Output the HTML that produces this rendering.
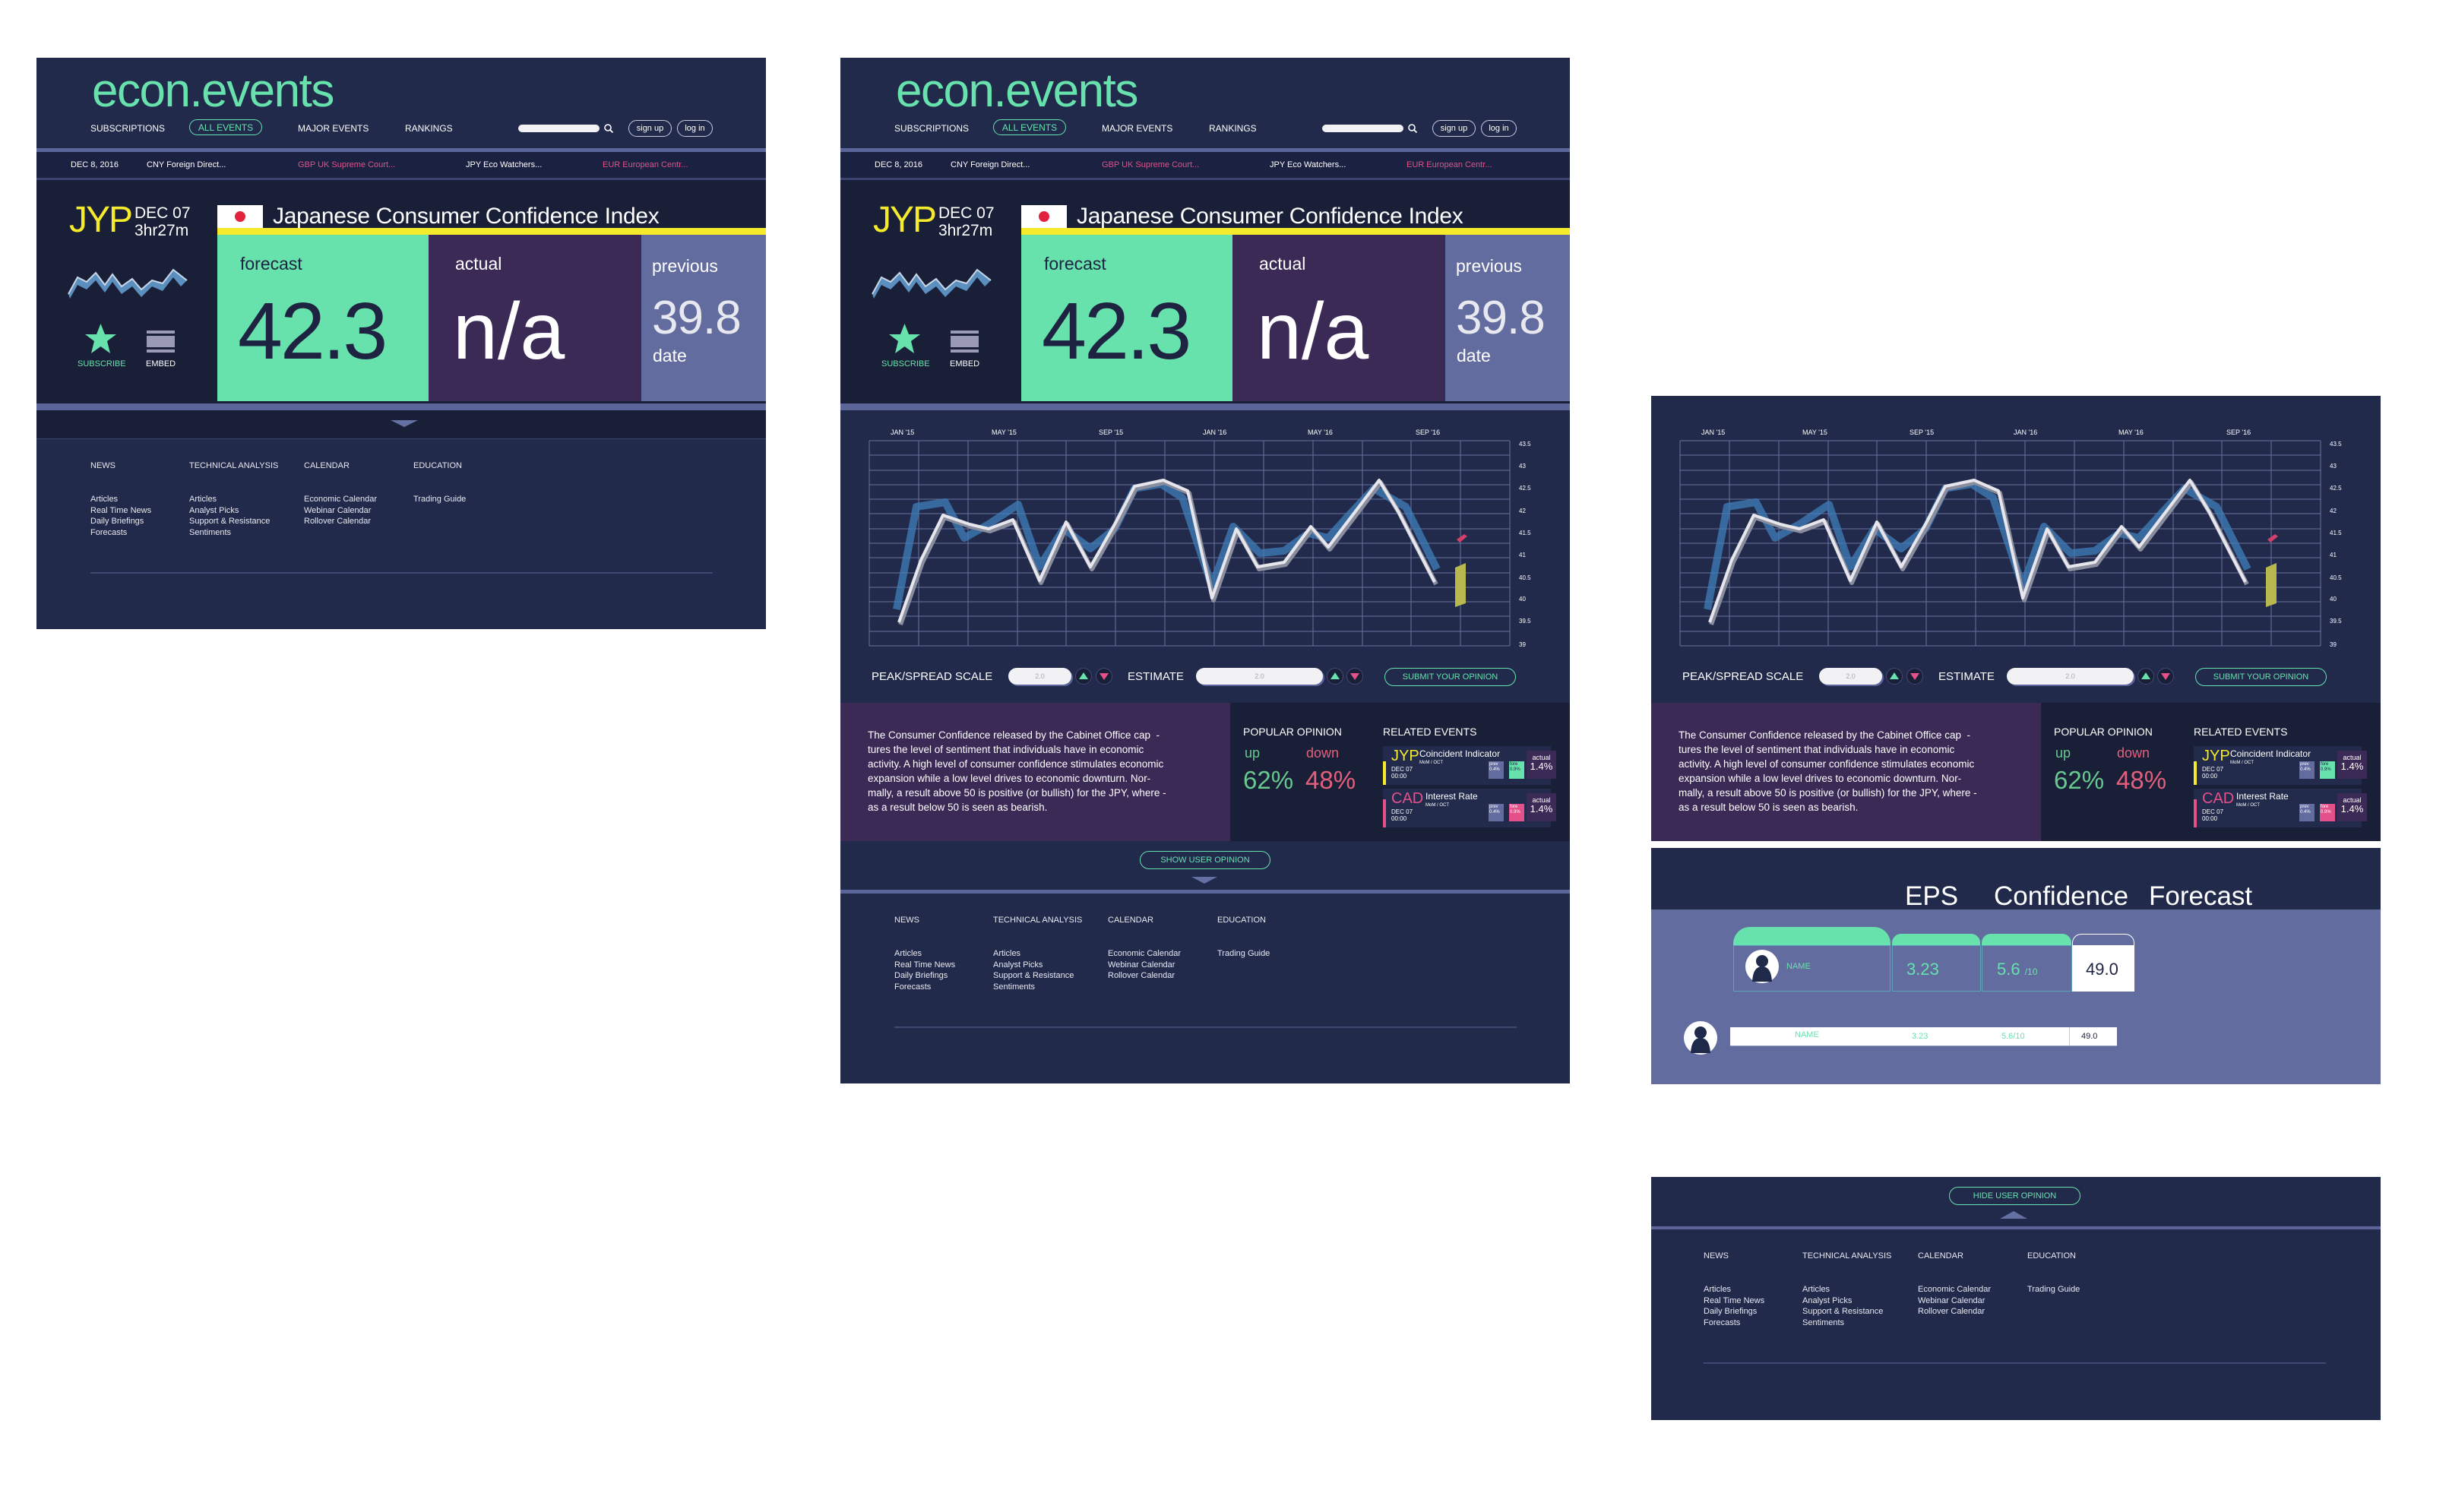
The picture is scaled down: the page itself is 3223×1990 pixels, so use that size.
<!DOCTYPE html>
<html><head><meta charset="utf-8">
<style>
*{margin:0;padding:0;box-sizing:border-box}
body{width:3223px;height:1990px;background:#fff;position:relative;overflow:hidden;font-family:"Liberation Sans Narrow","Liberation Sans",sans-serif;color:#fff}
.a{position:absolute}
.p{position:absolute;width:960px;overflow:hidden;background:#212a4b}
.t{position:absolute;white-space:nowrap;line-height:1}
.pill{position:absolute;border:1.5px solid #67e2ad;border-radius:14px;color:#67e2ad;display:flex;align-items:center;justify-content:center;font-size:12px}
.wp{position:absolute;border:1.5px solid #c8cbe0;border-radius:12px;color:#fff;display:flex;align-items:center;justify-content:center;font-size:11px}
.foot{position:absolute;left:0;width:960px;height:260px;background:#212a4b}
.foot .h{position:absolute;top:29px;font-size:11px;color:#e8e8f0}
.foot .l{position:absolute;top:72px;font-size:11px;line-height:14.7px;color:#e8e8f0}
.foot .ln{position:absolute;top:175px;left:71px;width:819px;height:2px;background:#3e4873}
.circ{position:absolute;width:22px;height:22px;border-radius:50%;background:#1a1f38;border:1px solid #3e4873}
.tri-up{position:absolute;width:0;height:0;border-left:6px solid transparent;border-right:6px solid transparent;border-bottom:9px solid #67e2ad;left:4px;top:5px}
.tri-dn{position:absolute;width:0;height:0;border-left:6px solid transparent;border-right:6px solid transparent;border-top:9px solid #e4508a;left:4px;top:6px}
.card{position:absolute;left:714px;width:221px;height:51px;background:#222b4c}
.sm{position:absolute;font-size:6px;line-height:7px;color:#fff;padding:1px}
</style></head><body>

<!-- ============ PANEL 1 ============ -->
<div class="p" style="left:48px;top:76px;height:752px">
  <div class="a" style="left:0;top:119px;width:960px;height:5px;background:#5c6599"></div>
  <div class="a" style="left:0;top:124px;width:960px;height:34px;background:#1b2140"></div>
  <div class="a" style="left:0;top:158px;width:960px;height:3px;background:#3b4470"></div>
  <div class="a" style="left:0;top:161px;width:960px;height:294px;background:#1a1f38"></div>
  <div class="a" style="left:0;top:455px;width:960px;height:9px;background:#5c6599"></div>
  <div class="a" style="left:0;top:464px;width:960px;height:37px;background:#1a1f38"></div>
  <div class="a" style="left:466px;top:477px;width:0;height:0;border-left:18px solid transparent;border-right:18px solid transparent;border-top:9px solid #6570a3"></div>
  <div class="a" style="left:0;top:501px;width:960px;height:1px;background:#3b4470"></div>

  <!-- header -->
  <div class="t" style="left:73px;top:13px;font-size:62px;color:#67e2ad;font-family:'Liberation Sans',sans-serif;letter-spacing:-1.5px">econ.events</div>
  <div class="t" style="left:71px;top:87px;font-size:12px">SUBSCRIPTIONS</div>
  <div class="pill" style="left:201px;top:81px;width:96px;height:21px">ALL EVENTS</div>
  <div class="t" style="left:344px;top:87px;font-size:12px">MAJOR EVENTS</div>
  <div class="t" style="left:485px;top:87px;font-size:12px">RANKINGS</div>
  <div class="a" style="left:634px;top:88px;width:107px;height:10px;background:#f2f2f5;border-radius:5px"></div>
  <svg class="a" style="left:746px;top:86px" width="14" height="14"><circle cx="6" cy="6" r="4" fill="none" stroke="#fff" stroke-width="1.6"/><line x1="9" y1="9" x2="12.5" y2="12.5" stroke="#fff" stroke-width="1.8"/></svg>
  <div class="wp" style="left:779px;top:82px;width:57px;height:22px">sign up</div>
  <div class="wp" style="left:843px;top:82px;width:47px;height:22px">log in</div>
  <!-- ticker -->
  <div class="t" style="left:45px;top:136px;font-size:11px">DEC 8, 2016</div>
  <div class="t" style="left:145px;top:136px;font-size:11px">CNY Foreign Direct...</div>
  <div class="t" style="left:344px;top:136px;font-size:11px;color:#e4508a">GBP UK Supreme Court...</div>
  <div class="t" style="left:565px;top:136px;font-size:11px">JPY Eco Watchers...</div>
  <div class="t" style="left:745px;top:136px;font-size:11px;color:#e4508a">EUR European Centr...</div>
  <!-- main -->
  <div class="t" style="left:43px;top:190px;font-size:48px;color:#f5ea2b;font-family:'Liberation Sans',sans-serif;letter-spacing:-2px">JYP</div>
  <div class="t" style="left:129px;top:194px;font-size:21px">DEC 07</div>
  <div class="t" style="left:129px;top:217px;font-size:21px">3hr27m</div>
  <svg class="a" style="left:40px;top:271px" width="162" height="48"><polygon points="2,40 14,18 26,24 38,12 50,28 60,14 72,30 86,20 98,34 112,22 126,26 140,8 158,22 150,30 140,18 126,36 112,30 98,44 86,30 72,40 60,24 50,38 38,22 26,34 14,28 4,46" fill="#5b8fc0"/><polyline points="2,40 14,18 26,24 38,12 50,28 60,14 72,30 86,20 98,34 112,22 126,26 140,8 158,22" fill="none" stroke="#c9d6e6" stroke-width="2"/></svg>
  <svg class="a" style="left:63px;top:349px" width="43" height="41"><polygon points="21.5,1 27,15 42,15 30,24 34,40 21.5,31 9,40 13,24 1,15 16,15" fill="#67e2ad"/></svg>
  <div class="a" style="left:145px;top:359px;width:37px;height:4px;background:#9a9ab5"></div>
  <div class="a" style="left:145px;top:366px;width:37px;height:15px;background:#9a9ab5"></div>
  <div class="a" style="left:145px;top:384px;width:37px;height:4px;background:#9a9ab5"></div>
  <div class="t" style="left:54px;top:398px;font-size:11px;color:#67e2ad">SUBSCRIBE</div>
  <div class="t" style="left:144px;top:398px;font-size:11px">EMBED</div>

  <div class="a" style="left:238px;top:194px;width:60px;height:30px;background:#fff"></div>
  <div class="a" style="left:261px;top:202px;width:14px;height:14px;border-radius:50%;background:#e2233d"></div>
  <div class="t" style="left:311px;top:194px;font-size:30px;font-family:'Liberation Sans',sans-serif;letter-spacing:-0.3px">Japanese Consumer Confidence Index</div>
  <div class="a" style="left:238px;top:224px;width:722px;height:9px;background:#f5ea2b"></div>
  <div class="a" style="left:238px;top:233px;width:278px;height:219px;background:#67e2ad"></div>
  <div class="a" style="left:516px;top:233px;width:280px;height:219px;background:#3a2a55"></div>
  <div class="a" style="left:796px;top:233px;width:164px;height:219px;background:#636c9f"></div>
  <div class="t" style="left:268px;top:260px;font-size:23px;color:#1d2340;font-family:'Liberation Sans',sans-serif">forecast</div>
  <div class="t" style="left:265px;top:307px;font-size:106px;color:#1d2340;font-family:'Liberation Sans',sans-serif;letter-spacing:-3px">42.3</div>
  <div class="t" style="left:551px;top:260px;font-size:23px;font-family:'Liberation Sans',sans-serif">actual</div>
  <div class="t" style="left:548px;top:307px;font-size:106px;font-family:'Liberation Sans',sans-serif">n/a</div>
  <div class="t" style="left:810px;top:263px;font-size:23px;font-family:'Liberation Sans',sans-serif">previous</div>
  <div class="t" style="left:810px;top:312px;font-size:62px;color:#e8e8f0;font-family:'Liberation Sans',sans-serif;letter-spacing:-1px">39.8</div>
  <div class="t" style="left:811px;top:381px;font-size:23px;font-family:'Liberation Sans',sans-serif">date</div>

  <div class="foot" style="top:502px">
    <div class="h" style="left:71px">NEWS</div><div class="h" style="left:201px">TECHNICAL ANALYSIS</div><div class="h" style="left:352px">CALENDAR</div><div class="h" style="left:496px">EDUCATION</div>
    <div class="l" style="left:71px">Articles<br>Real Time News<br>Daily Briefings<br>Forecasts</div>
    <div class="l" style="left:201px">Articles<br>Analyst Picks<br>Support &amp; Resistance<br>Sentiments</div>
    <div class="l" style="left:352px">Economic Calendar<br>Webinar Calendar<br>Rollover Calendar</div>
    <div class="l" style="left:496px">Trading Guide</div>
    <div class="ln"></div>
  </div>
</div>

<!-- ============ PANEL 2 ============ -->
<div class="p" style="left:1106px;top:76px;height:1350px">
  <div class="a" style="left:0;top:119px;width:960px;height:5px;background:#5c6599"></div>
  <div class="a" style="left:0;top:124px;width:960px;height:34px;background:#1b2140"></div>
  <div class="a" style="left:0;top:158px;width:960px;height:3px;background:#3b4470"></div>
  <div class="a" style="left:0;top:161px;width:960px;height:294px;background:#1a1f38"></div>
  <div class="a" style="left:0;top:455px;width:960px;height:9px;background:#5c6599"></div>

  <div class="t" style="left:73px;top:13px;font-size:62px;color:#67e2ad;font-family:'Liberation Sans',sans-serif;letter-spacing:-1.5px">econ.events</div>
  <div class="t" style="left:71px;top:87px;font-size:12px">SUBSCRIPTIONS</div>
  <div class="pill" style="left:201px;top:81px;width:96px;height:21px">ALL EVENTS</div>
  <div class="t" style="left:344px;top:87px;font-size:12px">MAJOR EVENTS</div>
  <div class="t" style="left:485px;top:87px;font-size:12px">RANKINGS</div>
  <div class="a" style="left:634px;top:88px;width:107px;height:10px;background:#f2f2f5;border-radius:5px"></div>
  <svg class="a" style="left:746px;top:86px" width="14" height="14"><circle cx="6" cy="6" r="4" fill="none" stroke="#fff" stroke-width="1.6"/><line x1="9" y1="9" x2="12.5" y2="12.5" stroke="#fff" stroke-width="1.8"/></svg>
  <div class="wp" style="left:779px;top:82px;width:57px;height:22px">sign up</div>
  <div class="wp" style="left:843px;top:82px;width:47px;height:22px">log in</div>
  <div class="t" style="left:45px;top:136px;font-size:11px">DEC 8, 2016</div>
  <div class="t" style="left:145px;top:136px;font-size:11px">CNY Foreign Direct...</div>
  <div class="t" style="left:344px;top:136px;font-size:11px;color:#e4508a">GBP UK Supreme Court...</div>
  <div class="t" style="left:565px;top:136px;font-size:11px">JPY Eco Watchers...</div>
  <div class="t" style="left:745px;top:136px;font-size:11px;color:#e4508a">EUR European Centr...</div>
  <div class="t" style="left:43px;top:190px;font-size:48px;color:#f5ea2b;font-family:'Liberation Sans',sans-serif;letter-spacing:-2px">JYP</div>
  <div class="t" style="left:129px;top:194px;font-size:21px">DEC 07</div>
  <div class="t" style="left:129px;top:217px;font-size:21px">3hr27m</div>
  <svg class="a" style="left:40px;top:271px" width="162" height="48"><polygon points="2,40 14,18 26,24 38,12 50,28 60,14 72,30 86,20 98,34 112,22 126,26 140,8 158,22 150,30 140,18 126,36 112,30 98,44 86,30 72,40 60,24 50,38 38,22 26,34 14,28 4,46" fill="#5b8fc0"/><polyline points="2,40 14,18 26,24 38,12 50,28 60,14 72,30 86,20 98,34 112,22 126,26 140,8 158,22" fill="none" stroke="#c9d6e6" stroke-width="2"/></svg>
  <svg class="a" style="left:63px;top:349px" width="43" height="41"><polygon points="21.5,1 27,15 42,15 30,24 34,40 21.5,31 9,40 13,24 1,15 16,15" fill="#67e2ad"/></svg>
  <div class="a" style="left:145px;top:359px;width:37px;height:4px;background:#9a9ab5"></div>
  <div class="a" style="left:145px;top:366px;width:37px;height:15px;background:#9a9ab5"></div>
  <div class="a" style="left:145px;top:384px;width:37px;height:4px;background:#9a9ab5"></div>
  <div class="t" style="left:54px;top:398px;font-size:11px;color:#67e2ad">SUBSCRIBE</div>
  <div class="t" style="left:144px;top:398px;font-size:11px">EMBED</div>
  <div class="a" style="left:238px;top:194px;width:60px;height:30px;background:#fff"></div>
  <div class="a" style="left:261px;top:202px;width:14px;height:14px;border-radius:50%;background:#e2233d"></div>
  <div class="t" style="left:311px;top:194px;font-size:30px;font-family:'Liberation Sans',sans-serif;letter-spacing:-0.3px">Japanese Consumer Confidence Index</div>
  <div class="a" style="left:238px;top:224px;width:722px;height:9px;background:#f5ea2b"></div>
  <div class="a" style="left:238px;top:233px;width:278px;height:219px;background:#67e2ad"></div>
  <div class="a" style="left:516px;top:233px;width:280px;height:219px;background:#3a2a55"></div>
  <div class="a" style="left:796px;top:233px;width:164px;height:219px;background:#636c9f"></div>
  <div class="t" style="left:268px;top:260px;font-size:23px;color:#1d2340;font-family:'Liberation Sans',sans-serif">forecast</div>
  <div class="t" style="left:265px;top:307px;font-size:106px;color:#1d2340;font-family:'Liberation Sans',sans-serif;letter-spacing:-3px">42.3</div>
  <div class="t" style="left:551px;top:260px;font-size:23px;font-family:'Liberation Sans',sans-serif">actual</div>
  <div class="t" style="left:548px;top:307px;font-size:106px;font-family:'Liberation Sans',sans-serif">n/a</div>
  <div class="t" style="left:810px;top:263px;font-size:23px;font-family:'Liberation Sans',sans-serif">previous</div>
  <div class="t" style="left:810px;top:312px;font-size:62px;color:#e8e8f0;font-family:'Liberation Sans',sans-serif;letter-spacing:-1px">39.8</div>
  <div class="t" style="left:811px;top:381px;font-size:23px;font-family:'Liberation Sans',sans-serif">date</div>

  <!-- chart + desc block -->
  <div class="a" id="blk" style="left:0;top:464px;width:960px;height:567px">
    <svg class="a" style="left:0;top:0" width="960" height="330">
      <g stroke="#7c86b2" stroke-width="1" opacity="0.8">
        <line x1="38" y1="40" x2="38" y2="310"/><line x1="103" y1="40" x2="103" y2="310"/><line x1="168" y1="40" x2="168" y2="310"/><line x1="233" y1="40" x2="233" y2="310"/><line x1="297" y1="40" x2="297" y2="310"/><line x1="362" y1="40" x2="362" y2="310"/><line x1="427" y1="40" x2="427" y2="310"/><line x1="492" y1="40" x2="492" y2="310"/><line x1="557" y1="40" x2="557" y2="310"/><line x1="622" y1="40" x2="622" y2="310"/><line x1="687" y1="40" x2="687" y2="310"/><line x1="751" y1="40" x2="751" y2="310"/><line x1="816" y1="40" x2="816" y2="310"/><line x1="881" y1="40" x2="881" y2="310"/>
        <line x1="38" y1="40" x2="881" y2="40"/><line x1="38" y1="59" x2="881" y2="59"/><line x1="38" y1="79" x2="881" y2="79"/><line x1="38" y1="98" x2="881" y2="98"/><line x1="38" y1="117" x2="881" y2="117"/><line x1="38" y1="136" x2="881" y2="136"/><line x1="38" y1="156" x2="881" y2="156"/><line x1="38" y1="175" x2="881" y2="175"/><line x1="38" y1="194" x2="881" y2="194"/><line x1="38" y1="214" x2="881" y2="214"/><line x1="38" y1="233" x2="881" y2="233"/><line x1="38" y1="252" x2="881" y2="252"/><line x1="38" y1="271" x2="881" y2="271"/><line x1="38" y1="291" x2="881" y2="291"/><line x1="38" y1="310" x2="881" y2="310"/>
      </g>
      <polyline points="74,262 100,127 138,121 163,168 195,150 234,124 262,206 294,156 329,182 361,156 387,103 422,97 450,115 489,232 517,153 552,188 584,185 616,162 642,168 674,133 702,103 744,127 785,209" fill="none" stroke="#3f7fba" stroke-width="10" stroke-linejoin="round" opacity="0.75"/>
      <polyline points="79,282 108,200 137,141 172,153 197,159 229,147 264,227 299,150 331,209 363,153 389,103 427,95 459,109 491,250 523,159 551,209 586,203 621,156 644,183 676,141 711,95 736,136 784,229" fill="none" stroke="#8a8d9e" stroke-width="6" stroke-linejoin="round"/>
      <polyline points="77,279 106,197 135,138 170,150 195,156 227,144 262,224 297,147 329,206 361,150 387,100 425,92 457,106 489,247 521,156 549,206 584,200 619,153 642,180 674,138 709,92 734,133 782,226" fill="none" stroke="#e6e6ec" stroke-width="4" stroke-linejoin="round"/>
      <polygon points="811,170 821,163 825,166 815,174" fill="#d1416c"/>
      <polygon points="809,207 823,201 823,254 809,259" fill="#b9b84e"/>
    </svg>
    <div class="t" style="left:66px;top:25px;font-size:9px">JAN '15</div>
    <div class="t" style="left:199px;top:25px;font-size:9px">MAY '15</div>
    <div class="t" style="left:340px;top:25px;font-size:9px">SEP '15</div>
    <div class="t" style="left:477px;top:25px;font-size:9px">JAN '16</div>
    <div class="t" style="left:615px;top:25px;font-size:9px">MAY '16</div>
    <div class="t" style="left:757px;top:25px;font-size:9px">SEP '16</div>
    <div class="t" style="left:893px;top:41px;font-size:8px">43.5</div>
    <div class="t" style="left:893px;top:70px;font-size:8px">43</div>
    <div class="t" style="left:893px;top:99px;font-size:8px">42.5</div>
    <div class="t" style="left:893px;top:129px;font-size:8px">42</div>
    <div class="t" style="left:893px;top:158px;font-size:8px">41.5</div>
    <div class="t" style="left:893px;top:187px;font-size:8px">41</div>
    <div class="t" style="left:893px;top:217px;font-size:8px">40.5</div>
    <div class="t" style="left:893px;top:245px;font-size:8px">40</div>
    <div class="t" style="left:893px;top:274px;font-size:8px">39.5</div>
    <div class="t" style="left:893px;top:305px;font-size:8px">39</div>
    <!-- controls -->
    <div class="t" style="left:41px;top:343px;font-size:15px">PEAK/SPREAD SCALE</div>
    <div class="a" style="left:221px;top:339px;width:83px;height:22px;border-radius:11px;background:#f2f2f5;box-shadow:2px 2px 0 #5c6599;color:#aaa;font-size:9px;text-align:center;line-height:22px">2.0</div>
    <div class="circ" style="left:309px;top:339px"><div class="tri-up"></div></div>
    <div class="circ" style="left:336px;top:339px"><div class="tri-dn"></div></div>
    <div class="t" style="left:378px;top:343px;font-size:15px">ESTIMATE</div>
    <div class="a" style="left:468px;top:339px;width:167px;height:22px;border-radius:11px;background:#f2f2f5;box-shadow:2px 2px 0 #5c6599;color:#aaa;font-size:9px;text-align:center;line-height:22px">2.0</div>
    <div class="circ" style="left:640px;top:339px"><div class="tri-up"></div></div>
    <div class="circ" style="left:666px;top:339px"><div class="tri-dn"></div></div>
    <div class="pill" style="left:716px;top:339px;width:173px;height:24px;font-size:11px">SUBMIT YOUR OPINION</div>
    <!-- description -->
    <div class="a" style="left:0;top:385px;width:960px;height:182px;background:#1a1f38"></div>
    <div class="a" style="left:0;top:385px;width:513px;height:182px;background:#3a2a55"></div>
    <div class="a" style="left:36px;top:418px;font-size:13.5px;line-height:19px;white-space:nowrap">The Consumer Confidence released by the Cabinet Office cap&nbsp; -<br>tures the level of sentiment that individuals have in economic<br>activity. A high level of consumer confidence stimulates economic<br>expansion while a low level drives to economic downturn. Nor-<br>mally, a result above 50 is positive (or bullish) for the JPY, where -<br>as a result below 50 is seen as bearish.</div>
    <div class="t" style="left:530px;top:416px;font-size:14px">POPULAR OPINION</div>
    <div class="t" style="left:532px;top:442px;font-size:18px;color:#67c98f">up</div>
    <div class="t" style="left:613px;top:442px;font-size:18px;color:#e2607c">down</div>
    <div class="t" style="left:530px;top:470px;font-size:33px;color:#67c98f;font-family:'Liberation Sans',sans-serif">62%</div>
    <div class="t" style="left:612px;top:470px;font-size:33px;color:#e2607c;font-family:'Liberation Sans',sans-serif">48%</div>
    <div class="t" style="left:714px;top:416px;font-size:14px">RELATED EVENTS</div>
    <div class="card" style="top:442px">
      <div class="a" style="left:0;top:20px;width:4px;height:31px;background:#f5ea2b"></div>
      <div class="t" style="left:11px;top:3px;font-size:20px;color:#f5ea2b">JYP</div>
      <div class="t" style="left:48px;top:4px;font-size:12px">Coincident Indicator</div>
      <div class="t" style="left:48px;top:19px;font-size:6px">MoM / OCT</div>
      <div class="t" style="left:11px;top:27px;font-size:8px">DEC 07</div>
      <div class="t" style="left:11px;top:36px;font-size:8px">00:00</div>
      <div class="sm" style="left:139px;top:20px;width:20px;height:23px;background:#636c9f">prev<br>0.4%</div>
      <div class="sm" style="left:166px;top:20px;width:20px;height:23px;background:#67e2ad;color:#1d2340">fore<br>0.9%</div>
      <div class="a" style="left:189px;top:6px;width:39px;height:37px;background:#3a2a55;font-size:9px;line-height:11px;text-align:center;padding-top:4px">actual<br><span style="font-size:13px">1.4%</span></div>
    </div>
    <div class="card" style="top:498px">
      <div class="a" style="left:0;top:14px;width:4px;height:37px;background:#e4508a"></div>
      <div class="t" style="left:11px;top:3px;font-size:20px;color:#e4508a">CAD</div>
      <div class="t" style="left:56px;top:4px;font-size:12px">Interest Rate</div>
      <div class="t" style="left:56px;top:19px;font-size:6px">MoM / OCT</div>
      <div class="t" style="left:11px;top:27px;font-size:8px">DEC 07</div>
      <div class="t" style="left:11px;top:36px;font-size:8px">00:00</div>
      <div class="sm" style="left:139px;top:20px;width:20px;height:23px;background:#636c9f">prev<br>0.4%</div>
      <div class="sm" style="left:166px;top:20px;width:20px;height:23px;background:#e4508a">fore<br>0.9%</div>
      <div class="a" style="left:189px;top:6px;width:39px;height:37px;background:#3a2a55;font-size:9px;line-height:11px;text-align:center;padding-top:4px">actual<br><span style="font-size:13px">1.4%</span></div>
    </div>
  </div>

  <div class="pill" style="left:394px;top:1044px;width:172px;height:24px;font-size:11px">SHOW USER OPINION</div>
  <div class="a" style="left:462px;top:1078px;width:0;height:0;border-left:17px solid transparent;border-right:17px solid transparent;border-top:9px solid #6570a3"></div>
  <div class="a" style="left:0;top:1095px;width:960px;height:5px;background:#5c6599"></div>
  <div class="foot" style="top:1100px">
    <div class="h" style="left:71px">NEWS</div><div class="h" style="left:201px">TECHNICAL ANALYSIS</div><div class="h" style="left:352px">CALENDAR</div><div class="h" style="left:496px">EDUCATION</div>
    <div class="l" style="left:71px">Articles<br>Real Time News<br>Daily Briefings<br>Forecasts</div>
    <div class="l" style="left:201px">Articles<br>Analyst Picks<br>Support &amp; Resistance<br>Sentiments</div>
    <div class="l" style="left:352px">Economic Calendar<br>Webinar Calendar<br>Rollover Calendar</div>
    <div class="l" style="left:496px">Trading Guide</div>
    <div class="ln"></div>
  </div>
</div>

<!-- ============ PANEL 3 (chart + desc) ============ -->
<div class="p" style="left:2173px;top:521px;height:586px">
  <div class="a" style="left:0;top:19px;width:960px;height:567px">
    <svg class="a" style="left:0;top:0" width="960" height="330">
      <g stroke="#7c86b2" stroke-width="1" opacity="0.8">
        <line x1="38" y1="40" x2="38" y2="310"/><line x1="103" y1="40" x2="103" y2="310"/><line x1="168" y1="40" x2="168" y2="310"/><line x1="233" y1="40" x2="233" y2="310"/><line x1="297" y1="40" x2="297" y2="310"/><line x1="362" y1="40" x2="362" y2="310"/><line x1="427" y1="40" x2="427" y2="310"/><line x1="492" y1="40" x2="492" y2="310"/><line x1="557" y1="40" x2="557" y2="310"/><line x1="622" y1="40" x2="622" y2="310"/><line x1="687" y1="40" x2="687" y2="310"/><line x1="751" y1="40" x2="751" y2="310"/><line x1="816" y1="40" x2="816" y2="310"/><line x1="881" y1="40" x2="881" y2="310"/>
        <line x1="38" y1="40" x2="881" y2="40"/><line x1="38" y1="59" x2="881" y2="59"/><line x1="38" y1="79" x2="881" y2="79"/><line x1="38" y1="98" x2="881" y2="98"/><line x1="38" y1="117" x2="881" y2="117"/><line x1="38" y1="136" x2="881" y2="136"/><line x1="38" y1="156" x2="881" y2="156"/><line x1="38" y1="175" x2="881" y2="175"/><line x1="38" y1="194" x2="881" y2="194"/><line x1="38" y1="214" x2="881" y2="214"/><line x1="38" y1="233" x2="881" y2="233"/><line x1="38" y1="252" x2="881" y2="252"/><line x1="38" y1="271" x2="881" y2="271"/><line x1="38" y1="291" x2="881" y2="291"/><line x1="38" y1="310" x2="881" y2="310"/>
      </g>
      <polyline points="74,262 100,127 138,121 163,168 195,150 234,124 262,206 294,156 329,182 361,156 387,103 422,97 450,115 489,232 517,153 552,188 584,185 616,162 642,168 674,133 702,103 744,127 785,209" fill="none" stroke="#3f7fba" stroke-width="10" stroke-linejoin="round" opacity="0.75"/>
      <polyline points="79,282 108,200 137,141 172,153 197,159 229,147 264,227 299,150 331,209 363,153 389,103 427,95 459,109 491,250 523,159 551,209 586,203 621,156 644,183 676,141 711,95 736,136 784,229" fill="none" stroke="#8a8d9e" stroke-width="6" stroke-linejoin="round"/>
      <polyline points="77,279 106,197 135,138 170,150 195,156 227,144 262,224 297,147 329,206 361,150 387,100 425,92 457,106 489,247 521,156 549,206 584,200 619,153 642,180 674,138 709,92 734,133 782,226" fill="none" stroke="#e6e6ec" stroke-width="4" stroke-linejoin="round"/>
      <polygon points="811,170 821,163 825,166 815,174" fill="#d1416c"/>
      <polygon points="809,207 823,201 823,254 809,259" fill="#b9b84e"/>
    </svg>
    <div class="t" style="left:66px;top:25px;font-size:9px">JAN '15</div>
    <div class="t" style="left:199px;top:25px;font-size:9px">MAY '15</div>
    <div class="t" style="left:340px;top:25px;font-size:9px">SEP '15</div>
    <div class="t" style="left:477px;top:25px;font-size:9px">JAN '16</div>
    <div class="t" style="left:615px;top:25px;font-size:9px">MAY '16</div>
    <div class="t" style="left:757px;top:25px;font-size:9px">SEP '16</div>
    <div class="t" style="left:893px;top:41px;font-size:8px">43.5</div>
    <div class="t" style="left:893px;top:70px;font-size:8px">43</div>
    <div class="t" style="left:893px;top:99px;font-size:8px">42.5</div>
    <div class="t" style="left:893px;top:129px;font-size:8px">42</div>
    <div class="t" style="left:893px;top:158px;font-size:8px">41.5</div>
    <div class="t" style="left:893px;top:187px;font-size:8px">41</div>
    <div class="t" style="left:893px;top:217px;font-size:8px">40.5</div>
    <div class="t" style="left:893px;top:245px;font-size:8px">40</div>
    <div class="t" style="left:893px;top:274px;font-size:8px">39.5</div>
    <div class="t" style="left:893px;top:305px;font-size:8px">39</div>
    <div class="t" style="left:41px;top:343px;font-size:15px">PEAK/SPREAD SCALE</div>
    <div class="a" style="left:221px;top:339px;width:83px;height:22px;border-radius:11px;background:#f2f2f5;box-shadow:2px 2px 0 #5c6599;color:#aaa;font-size:9px;text-align:center;line-height:22px">2.0</div>
    <div class="circ" style="left:309px;top:339px"><div class="tri-up"></div></div>
    <div class="circ" style="left:336px;top:339px"><div class="tri-dn"></div></div>
    <div class="t" style="left:378px;top:343px;font-size:15px">ESTIMATE</div>
    <div class="a" style="left:468px;top:339px;width:167px;height:22px;border-radius:11px;background:#f2f2f5;box-shadow:2px 2px 0 #5c6599;color:#aaa;font-size:9px;text-align:center;line-height:22px">2.0</div>
    <div class="circ" style="left:640px;top:339px"><div class="tri-up"></div></div>
    <div class="circ" style="left:666px;top:339px"><div class="tri-dn"></div></div>
    <div class="pill" style="left:716px;top:339px;width:173px;height:24px;font-size:11px">SUBMIT YOUR OPINION</div>
    <div class="a" style="left:0;top:385px;width:960px;height:182px;background:#1a1f38"></div>
    <div class="a" style="left:0;top:385px;width:513px;height:182px;background:#3a2a55"></div>
    <div class="a" style="left:36px;top:418px;font-size:13.5px;line-height:19px;white-space:nowrap">The Consumer Confidence released by the Cabinet Office cap&nbsp; -<br>tures the level of sentiment that individuals have in economic<br>activity. A high level of consumer confidence stimulates economic<br>expansion while a low level drives to economic downturn. Nor-<br>mally, a result above 50 is positive (or bullish) for the JPY, where -<br>as a result below 50 is seen as bearish.</div>
    <div class="t" style="left:530px;top:416px;font-size:14px">POPULAR OPINION</div>
    <div class="t" style="left:532px;top:442px;font-size:18px;color:#67c98f">up</div>
    <div class="t" style="left:613px;top:442px;font-size:18px;color:#e2607c">down</div>
    <div class="t" style="left:530px;top:470px;font-size:33px;color:#67c98f;font-family:'Liberation Sans',sans-serif">62%</div>
    <div class="t" style="left:612px;top:470px;font-size:33px;color:#e2607c;font-family:'Liberation Sans',sans-serif">48%</div>
    <div class="t" style="left:714px;top:416px;font-size:14px">RELATED EVENTS</div>
    <div class="card" style="top:442px">
      <div class="a" style="left:0;top:20px;width:4px;height:31px;background:#f5ea2b"></div>
      <div class="t" style="left:11px;top:3px;font-size:20px;color:#f5ea2b">JYP</div>
      <div class="t" style="left:48px;top:4px;font-size:12px">Coincident Indicator</div>
      <div class="t" style="left:48px;top:19px;font-size:6px">MoM / OCT</div>
      <div class="t" style="left:11px;top:27px;font-size:8px">DEC 07</div>
      <div class="t" style="left:11px;top:36px;font-size:8px">00:00</div>
      <div class="sm" style="left:139px;top:20px;width:20px;height:23px;background:#636c9f">prev<br>0.4%</div>
      <div class="sm" style="left:166px;top:20px;width:20px;height:23px;background:#67e2ad;color:#1d2340">fore<br>0.9%</div>
      <div class="a" style="left:189px;top:6px;width:39px;height:37px;background:#3a2a55;font-size:9px;line-height:11px;text-align:center;padding-top:4px">actual<br><span style="font-size:13px">1.4%</span></div>
    </div>
    <div class="card" style="top:498px">
      <div class="a" style="left:0;top:14px;width:4px;height:37px;background:#e4508a"></div>
      <div class="t" style="left:11px;top:3px;font-size:20px;color:#e4508a">CAD</div>
      <div class="t" style="left:56px;top:4px;font-size:12px">Interest Rate</div>
      <div class="t" style="left:56px;top:19px;font-size:6px">MoM / OCT</div>
      <div class="t" style="left:11px;top:27px;font-size:8px">DEC 07</div>
      <div class="t" style="left:11px;top:36px;font-size:8px">00:00</div>
      <div class="sm" style="left:139px;top:20px;width:20px;height:23px;background:#636c9f">prev<br>0.4%</div>
      <div class="sm" style="left:166px;top:20px;width:20px;height:23px;background:#e4508a">fore<br>0.9%</div>
      <div class="a" style="left:189px;top:6px;width:39px;height:37px;background:#3a2a55;font-size:9px;line-height:11px;text-align:center;padding-top:4px">actual<br><span style="font-size:13px">1.4%</span></div>
    </div>
  </div>
</div>

<!-- ============ PANEL 4 (user opinion) ============ -->
<div class="p" style="left:2173px;top:1116px;height:311px">
  <div class="a" style="left:0;top:81px;width:960px;height:230px;background:#636c9f"></div>
  <div class="t" style="left:334px;top:46px;font-size:35px;font-family:'Liberation Sans',sans-serif">EPS</div>
  <div class="t" style="left:451px;top:46px;font-size:35px;font-family:'Liberation Sans',sans-serif">Confidence</div>
  <div class="t" style="left:655px;top:46px;font-size:35px;font-family:'Liberation Sans',sans-serif">Forecast</div>
  <!-- row 1 -->
  <div class="a" style="left:108px;top:104px;width:207px;height:24px;background:#67e2ad;border-radius:22px 22px 0 0"></div>
  <div class="a" style="left:317px;top:113px;width:116px;height:15px;background:#67e2ad;border-radius:12px 12px 0 0"></div>
  <div class="a" style="left:435px;top:113px;width:118px;height:15px;background:#67e2ad;border-radius:12px 12px 0 0"></div>
  <div class="a" style="left:554px;top:113px;width:82px;height:16px;border:1.5px solid #fff;border-bottom:none;border-radius:12px 12px 0 0"></div>
  <div class="a" style="left:108px;top:128px;width:207px;height:61px;border:1px solid #5aa3b6"></div>
  <div class="a" style="left:317px;top:128px;width:117px;height:61px;border:1px solid #5aa3b6"></div>
  <div class="a" style="left:435px;top:128px;width:119px;height:61px;border:1px solid #5aa3b6"></div>
  <div class="a" style="left:554px;top:128px;width:82px;height:61px;background:#fff"></div>
  <svg class="a" style="left:124px;top:134px" width="44" height="44"><circle cx="22" cy="22" r="22" fill="#fff"/><circle cx="22" cy="15" r="8" fill="#1f2a4b"/><path d="M9,42 Q10,22 22,22 Q34,22 35,42 Z" fill="#1f2a4b"/></svg>
  <div class="t" style="left:178px;top:151px;font-size:11px;color:#67e2ad">NAME</div>
  <div class="t" style="left:336px;top:149px;font-size:22px;color:#67e2ad">3.23</div>
  <div class="t" style="left:455px;top:149px;font-size:22px;color:#67e2ad">5.6 <span style="font-size:12px">/10</span></div>
  <div class="t" style="left:572px;top:149px;font-size:22px;color:#1d2340">49.0</div>
  <!-- row 2 -->
  <svg class="a" style="left:43px;top:228px" width="44" height="44"><circle cx="22" cy="22" r="22" fill="#fff"/><circle cx="22" cy="15" r="8" fill="#1f2a4b"/><path d="M9,42 Q10,22 22,22 Q34,22 35,42 Z" fill="#1f2a4b"/></svg>
  <div class="a" style="left:104px;top:236px;width:509px;height:24px;background:#fff;box-shadow:0 1px 0 #9aa0c4"></div>
  <div class="a" style="left:550px;top:236px;width:1px;height:24px;background:#ccc"></div>
  <div class="t" style="left:189px;top:241px;font-size:11px;color:#67e2ad">NAME</div>
  <div class="t" style="left:343px;top:243px;font-size:11px;color:#67e2ad">3.23</div>
  <div class="t" style="left:461px;top:243px;font-size:11px;color:#67e2ad">5.6/10</div>
  <div class="t" style="left:566px;top:243px;font-size:11px;color:#1d2340">49.0</div>
</div>

<!-- ============ PANEL 5 ============ -->
<div class="p" style="left:2173px;top:1549px;height:320px">
  <div class="pill" style="left:392px;top:13px;width:173px;height:24px;font-size:11px">HIDE USER OPINION</div>
  <div class="a" style="left:459px;top:45px;width:0;height:0;border-left:18px solid transparent;border-right:18px solid transparent;border-bottom:10px solid #6570a3"></div>
  <div class="a" style="left:0;top:65px;width:960px;height:4px;background:#5c6599"></div>
  <div class="foot" style="top:69px">
    <div class="h" style="left:69px">NEWS</div><div class="h" style="left:199px">TECHNICAL ANALYSIS</div><div class="h" style="left:351px">CALENDAR</div><div class="h" style="left:495px">EDUCATION</div>
    <div class="l" style="left:69px">Articles<br>Real Time News<br>Daily Briefings<br>Forecasts</div>
    <div class="l" style="left:199px">Articles<br>Analyst Picks<br>Support &amp; Resistance<br>Sentiments</div>
    <div class="l" style="left:351px">Economic Calendar<br>Webinar Calendar<br>Rollover Calendar</div>
    <div class="l" style="left:495px">Trading Guide</div>
    <div class="ln" style="left:69px"></div>
  </div>
</div>

</body></html>
